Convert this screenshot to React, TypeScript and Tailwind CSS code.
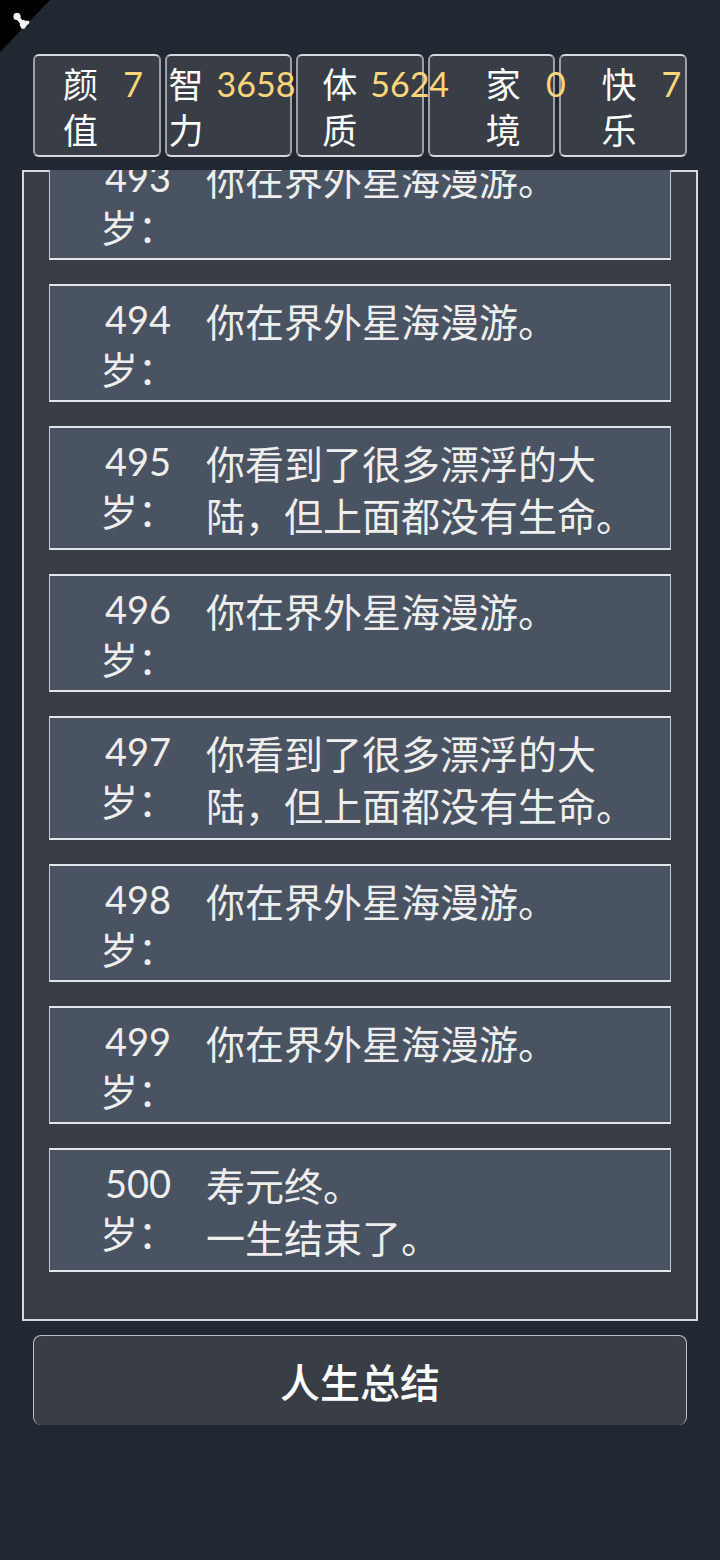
type Stat = {
  label: string;
  value: number;
  indent: string;
};

type LifeEvent = {
  age: number;
  lines: string[];
};

const stats: Stat[] = [
  { label: "颜值", value: 7, indent: "pl-7" },
  { label: "智力", value: 3658, indent: "pl-0.5" },
  { label: "体质", value: 5624, indent: "pl-6" },
  { label: "家境", value: 0, indent: "pl-14" },
  { label: "快乐", value: 7, indent: "pl-10" },
];

const roaming = "你在界外星海漫游。";
const continents = "你看到了很多漂浮的大陆，但上面都没有生命。";

const events: LifeEvent[] = [
  { age: 493, lines: [roaming] },
  { age: 494, lines: [roaming] },
  { age: 495, lines: [continents] },
  { age: 496, lines: [roaming] },
  { age: 497, lines: [continents] },
  { age: 498, lines: [roaming] },
  { age: 499, lines: [roaming] },
  { age: 500, lines: ["寿元终。", "一生结束了。"] },
];

function CornerBadge() {
  return (
    <svg
      className="absolute left-0 top-0 h-[52px] w-[50px]"
      viewBox="0 0 50 52"
      aria-hidden="true"
    >
      <path d="M0 0H50L0 52Z" fill="#000" />
      <g fill="#f4f4f4" stroke="#f4f4f4" strokeLinejoin="round">
        <circle cx="17" cy="16.5" r="3.4" strokeWidth="0.5" />
        <path d="M18 18L23 24" strokeWidth="4" />
        <path
          d="M21 22.5L23.5 20.5L25 21.5L28.5 21.5L28.5 23L26 25L24 28H22L20.5 25Z"
          strokeWidth="1.5"
        />
      </g>
    </svg>
  );
}

function StatBox({ label, value, indent }: Stat) {
  return (
    <div
      className={`flex rounded-md border-2 border-x-[#9da1a7] border-y-[#d5d8dc] bg-[#393e46] pb-0.5 pt-[5px] leading-[46px] ${indent}`}
    >
      <dt className="w-9 shrink-0 break-all text-[35px] text-white">{label}</dt>
      {/* long values run over into the next box */}
      <dd className="relative z-10 ml-3 min-w-11 shrink-0 text-center text-[34px] text-[#ffd77a]">
        {value}
      </dd>
    </div>
  );
}

function EventRow({ age, lines }: LifeEvent) {
  return (
    <li className="flex border-x border-y-2 border-x-[#c3c7cc] border-y-[#e3e5e8] bg-[#4a5361] pb-1.5 pl-5 pt-2">
      <div className="w-[136px] shrink-0 text-center text-[38px] leading-[50px]">
        {age}岁：
      </div>
      <div className="min-w-0 flex-1 pr-6 pt-0.5 text-[39px] leading-[52px]">
        {lines.map((line) => (
          <p key={line}>{line}</p>
        ))}
      </div>
    </li>
  );
}

export default function App() {
  return (
    <main className="relative flex h-dvh flex-col bg-[#222831] pb-[135px] pt-[54px] font-[Lato,'Noto_Sans_CJK_SC',sans-serif] text-[#eeeeee]">
      <CornerBadge />

      <dl className="grid grid-cols-5 gap-1 px-[33px]">
        {stats.map((stat) => (
          <StatBox key={stat.label} {...stat} />
        ))}
      </dl>

      <section className="mx-[22px] mt-[13px] flex min-h-0 flex-1 flex-col border-2 border-[#d5d8dc] bg-[#393e46]">
        {/* reversed column keeps the newest event in view */}
        <div className="-mt-0.5 flex min-h-0 flex-1 flex-col-reverse overflow-y-auto px-[25px] [scrollbar-width:none]">
          <ol className="flex shrink-0 flex-col gap-6 pb-[47px]">
            {events.map((event) => (
              <EventRow key={event.age} {...event} />
            ))}
          </ol>
        </div>
      </section>

      <button
        type="button"
        className="mx-[33px] mt-[14px] h-[90px] shrink-0 cursor-pointer rounded-lg border border-b-0 border-[#b9bcc2] bg-[#393e46] pt-1 text-[40px] font-medium text-white"
      >
        人生总结
      </button>
    </main>
  );
}
